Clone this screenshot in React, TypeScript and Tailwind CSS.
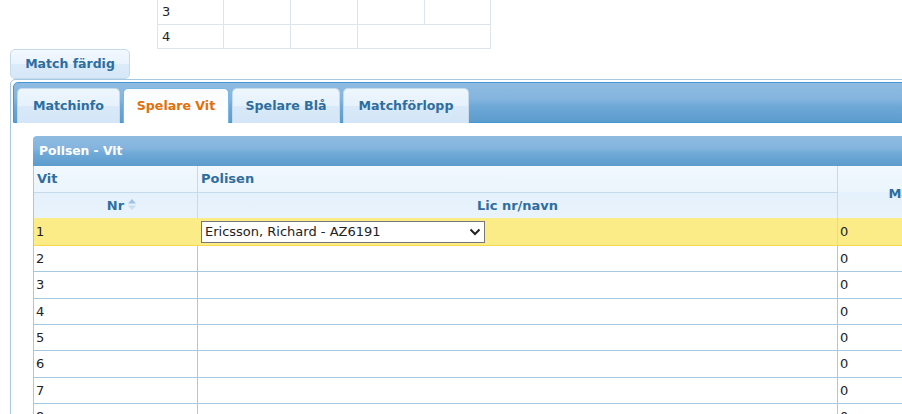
import React from "react";

function SortIcon() {
  return (
    <svg width="8" height="11" viewBox="0 0 8 11">
      <polygon points="4,0 8,4.5 0,4.5" fill="#9cc2e4" />
      <polygon points="0,6.5 8,6.5 4,11" fill="#c8ddf0" />
    </svg>
  );
}

function Chevron() {
  return (
    <svg width="12" height="8" viewBox="0 0 12 8">
      <path d="M1.5 1.5 L6 6 L10.5 1.5" fill="none" stroke="#222" strokeWidth="2" />
    </svg>
  );
}

const tabs = [
  { label: "Matchinfo", w: "w-[103px]", active: false },
  { label: "Spelare Vit", w: "w-[106px]", active: true },
  { label: "Spelare Blå", w: "w-[108px]", active: false },
  { label: "Matchförlopp", w: "w-[126px]", active: false },
];

const rows = [2, 3, 4, 5, 6, 7, 8, 9];

export default function App() {
  return (
    <div className="w-[902px] h-[414px] overflow-hidden bg-white font-['DejaVu_Sans',Verdana,sans-serif] text-[#222]">
      {/* top table (partially scrolled) */}
      <div className="ml-[157px] -mt-px flex flex-col text-[13px]">
        <div className="flex h-[26px]">
          <div className="w-[67px] border border-[#dde4ec] flex items-center pl-[4px]">3</div>
          <div className="w-[67px] border-y border-r border-[#dde4ec]" />
          <div className="w-[67px] border-y border-r border-[#dde4ec]" />
          <div className="w-[67px] border-y border-r border-[#dde4ec]" />
          <div className="w-[66px] border-y border-r border-[#dde4ec]" />
        </div>
        <div className="flex h-[24px]">
          <div className="w-[67px] border-x border-b border-[#dde4ec] flex items-center pl-[4px]">4</div>
          <div className="w-[67px] border-b border-r border-[#dde4ec]" />
          <div className="w-[67px] border-b border-r border-[#dde4ec]" />
          <div className="w-[133px] border-b border-r border-[#dde4ec]" />
        </div>
      </div>

      {/* Match färdig button */}
      <button className="ml-[10px] w-[120px] h-[30px] rounded-[5px] border border-[#c5dbec] bg-[linear-gradient(#f2f8fe,#e9f3fd_50%,#dcebf9_50%,#d6e7f8)] text-[12.5px] font-bold text-[#2e6e9e] flex items-center justify-center">
        Match färdig
      </button>

      {/* tabs widget */}
      <div className="ml-[10px] w-[1200px] h-[400px] border border-[#a6c9e2] rounded-tl-[5px] pt-[2px] pl-[2px]">
        <div className="h-[41px] border border-[#4297d7] rounded-tl-[5px] bg-[linear-gradient(to_bottom,#8fbbe0,#84b5de_40%,#6ea8d7_60%,#5c9ccc)] flex items-end pl-[3px] gap-[3px]">
          {tabs.map((t) =>
            t.active ? (
              <div
                key={t.label}
                className={`${t.w} h-[35px] -mb-px rounded-t-[5px] border border-b-0 border-[#79b7e7] bg-[linear-gradient(#fafcfd,#ffffff)] text-[12.6px] font-bold text-[#e17009] flex items-center justify-center`}
              >
                {t.label}
              </div>
            ) : (
              <div
                key={t.label}
                className={`${t.w} h-[35px] -mb-px rounded-t-[5px] border border-b-0 border-[#c5dbec] bg-[linear-gradient(#eef6fd,#e6f1fc_50%,#d9e9f9_50%,#d3e5f7)] text-[12.6px] font-bold text-[#2e6e9e] flex items-center justify-center`}
              >
                {t.label}
              </div>
            )
          )}
        </div>

        {/* content */}
        <div className="pt-[13px] pl-[20px]">
          <div className="h-[30px] rounded-tl-[4px] bg-[linear-gradient(to_bottom,#8fbbe0,#84b5de_40%,#6ea8d7_60%,#5c9ccc)] flex items-center pl-[6px] text-[12.3px] font-bold text-white">
            Polisen - Vit
          </div>

          <div className="border-l border-[#a6c9e2] w-[1160px]">
            {/* header */}
            <div className="grid grid-cols-[164px_640px_128px_1fr] grid-rows-[27px_25px] bg-[linear-gradient(#f1f8fe,#ecf5fd_50%,#e4f0fb_50%,#e9f3fc)] text-[13px] font-bold text-[#2e6e9e]">
              <div className="border-b border-r border-[#c5dbec] flex items-center pl-[3px]">Vit</div>
              <div className="border-b border-r border-[#c5dbec] flex items-center pl-[3px]">Polisen</div>
              <div className="row-span-2 border-r border-[#c5dbec] flex items-center justify-center pt-[4px]">Mål</div>
              <div className="row-span-2 flex items-center justify-center" />
              <div className="border-r border-[#c5dbec] flex items-center justify-center">
                <span className="relative">
                  Nr
                  <span className="absolute left-full top-[3px] ml-[4px] flex">
                    <SortIcon />
                  </span>
                </span>
              </div>
              <div className="border-r border-[#c5dbec] flex items-center justify-center">Lic nr/navn</div>
            </div>

            {/* first (highlighted) row */}
            <div className="flex h-[28px] bg-[#fbec88] border-b border-[#f6d94c] text-[13px]">
              <div className="w-[164px] border-r border-[#fbec88] flex items-center pl-[2px]">1</div>
              <div className="w-[640px] border-r border-[#e8dc8a] flex items-center pl-[3px]">
                <div className="relative w-[284px] h-[22px]">
                  <select
                    className="appearance-none w-full h-full border border-[#767676] bg-white text-[13px] text-[#222] pl-[3px] outline-none"
                    defaultValue="AZ6191"
                  >
                    <option value="AZ6191">Ericsson, Richard - AZ6191</option>
                  </select>
                  <span className="absolute right-[4px] top-[7px] pointer-events-none flex">
                    <Chevron />
                  </span>
                </div>
              </div>
              <div className="w-[128px] flex items-center pl-[2px]">0</div>
            </div>

            {rows.map((n) => (
              <div key={n} className="flex h-[26.33px] border-b border-[#a6c9e2] text-[13px]">
                <div className="w-[164px] border-r border-[#a6c9e2] flex items-center pl-[2px]">{n}</div>
                <div className="w-[640px] border-r border-[#a6c9e2]" />
                <div className="w-[128px] flex items-center pl-[2px]">0</div>
              </div>
            ))}
          </div>
        </div>
      </div>
    </div>
  );
}
